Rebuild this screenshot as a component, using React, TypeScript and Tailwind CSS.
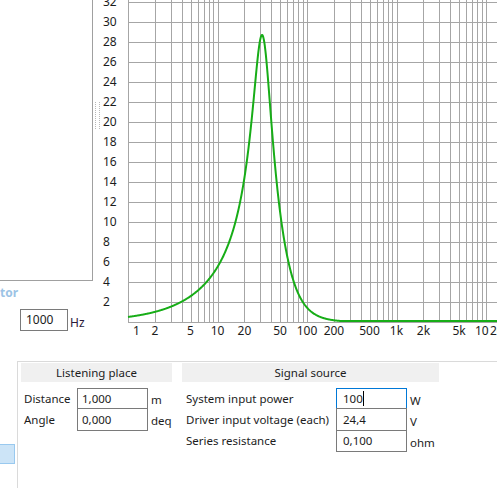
import React from "react";

const X = (f: number) => 128 + 89.5 * Math.log10(f);
const Y = (v: number) => 322 - 10 * v;

function curvePath() {
  const f0 = 32;
  const Q = 1.9;
  const raw = (f: number) => {
    const x = f / f0;
    const h = x / Math.sqrt((1 - x * x) ** 2 + (x / Q) ** 2);
    const l = 1 / Math.sqrt(1 + (x / 1.6) ** 4);
    return h * l;
  };
  let mx = 0;
  const pts: [number, number][] = [];
  for (let e = 0; e <= 4.35; e += 0.004) {
    const f = Math.pow(10, e);
    const r = raw(f);
    if (r > mx) mx = r;
    pts.push([f, r]);
  }
  const s = 28.7 / mx;
  return pts
    .map(([f, r], i) => {
      const v = Math.max(r * s, 0.1);
      return `${i === 0 ? "M" : "L"}${X(f).toFixed(2)},${Y(v).toFixed(2)}`;
    })
    .join(" ");
}

function Chart() {
  const vx: number[] = [];
  for (const d of [1, 10, 100, 1000, 10000]) {
    for (let m = 1; m <= 9; m++) {
      const x = X(d * m);
      if (x <= 498) vx.push(Math.round(x) + 0.5);
    }
  }
  const hy: number[] = [];
  for (let v = 0; v <= 32; v += 2) hy.push(Y(v) + 0.5);
  const ylabels: number[] = [];
  for (let v = 2; v <= 32; v += 2) ylabels.push(v);
  const xl: [string, number][] = [
    ["2", 2],
    ["5", 5],
    ["10", 10],
    ["20", 20],
    ["50", 50],
    ["100", 100],
    ["200", 200],
    ["500", 500],
    ["1k", 1000],
    ["2k", 2000],
    ["5k", 5000],
  ];
  return (
    <svg
      width={404}
      height={361}
      viewBox="93 0 404 361"
      className="shrink-0 block"
      style={{ fontFamily: "'Noto Sans', sans-serif" }}
    >
      <g stroke="#a6a6a6" strokeWidth={1} shapeRendering="crispEdges">
        {vx.map((x, i) => (
          <line key={"v" + i} x1={x} x2={x} y1={0} y2={322.5} />
        ))}
        {hy.map((y, i) => (
          <line key={"h" + i} x1={128} x2={497} y1={y} y2={y} />
        ))}
      </g>
      <g stroke="#b8b8b8" strokeWidth={1} strokeDasharray="1 1" shapeRendering="crispEdges">
        <line x1={95.5} x2={95.5} y1={102} y2={130} />
        <line x1={99.5} x2={99.5} y1={102} y2={130} />
      </g>
      <g fontSize={12} fill="#1c1c1c">
        {ylabels.map((v) => (
          <text key={v} x={103} y={Y(v) + 4.3}>
            {v}
          </text>
        ))}
        <text x={133} y={335}>
          1
        </text>
        {xl.map(([t, f]) => (
          <text key={t} x={X(f)} y={335} textAnchor="middle">
            {t}
          </text>
        ))}
        <text x={475} y={335}>
          10
        </text>
        <text x={490} y={335}>
          20k
        </text>
      </g>
      <path d={curvePath()} fill="none" stroke="#17ad17" strokeWidth={2} strokeLinejoin="round" />
    </svg>
  );
}

function Box({
  children,
  className,
}: {
  children: React.ReactNode;
  className: string;
}) {
  return <div className={className}>{children}</div>;
}

export default function App() {
  return (
    <div className="w-[497px] h-[488px] overflow-hidden bg-white font-['Noto_Sans',sans-serif] text-[#1c1c1c]">
      {/* top */}
      <div className="flex h-[361px]">
        <div className="w-[93px] shrink-0 flex flex-col">
          <div className="h-[281px] border-r border-b border-[#a0a0a0]" />
          <div className="mt-[4px] text-[12px] leading-[16px] font-bold text-[#9cc3e5]">tor</div>
          <div className="mt-[8px] ml-[20px] flex items-end">
            <div className="w-[48px] h-[22px] border border-[#7a7a7a] pl-[5px] text-[12px] leading-[20px]">
              1000
            </div>
            <div className="ml-[2px] text-[12px] leading-[16px] text-[#2a1a3a]">Hz</div>
          </div>
        </div>
        <Chart />
      </div>
      {/* bottom */}
      <div className="flex h-[127px]">
        <div className="w-[17px] shrink-0">
          <div className="mt-[83px] -ml-px w-[16px] h-[20px] bg-[#cce4f7] border border-[#99c9ef]" />
        </div>
        <div className="flex-1 border-l border-t border-[#dadada] pl-[3px] pt-[1px] text-[11.5px]">
          <div className="flex gap-[10px]">
            {/* Listening place */}
            <div className="w-[151px] shrink-0">
              <div className="h-[19px] bg-[#f0f0f0] flex items-center justify-center leading-none">
                Listening place
              </div>
              <div className="mt-[6px] flex flex-col">
                <div className="flex h-[21px]">
                  <div className="w-[56px] pl-[3px] flex items-center">Distance</div>
                  <Box className="w-[71px] border border-[#7a7a7a] pl-[4px] flex items-center">1,000</Box>
                  <div className="ml-[3px] flex items-center pt-[2px]">m</div>
                </div>
                <div className="flex h-[23px] -mt-px">
                  <div className="w-[56px] pl-[3px] flex items-center">Angle</div>
                  <Box className="w-[71px] border border-[#7a7a7a] pl-[4px] flex items-center">0,000</Box>
                  <div className="ml-[3px] flex items-center pt-[2px]">deq</div>
                </div>
              </div>
            </div>
            {/* Signal source */}
            <div className="w-[257px] shrink-0">
              <div className="h-[19px] bg-[#f0f0f0] flex items-center justify-center leading-none">
                Signal source
              </div>
              <div className="mt-[6px] flex flex-col">
                <div className="flex h-[21px]">
                  <div className="w-[154px] pl-[4px] flex items-center">System input power</div>
                  <Box className="w-[71px] border border-[#0078d7] pl-[6px] flex items-center">
                    100
                    <span className="inline-block w-px h-[15px] bg-black" />
                  </Box>
                  <div className="ml-[3px] flex items-center pt-[4px]">W</div>
                </div>
                <div className="flex h-[23px] -mt-px">
                  <div className="w-[154px] pl-[4px] flex items-center">Driver input voltage (each)</div>
                  <Box className="w-[71px] border border-[#7a7a7a] pl-[6px] flex items-center">24,4</Box>
                  <div className="ml-[3px] flex items-center pt-[4px]">V</div>
                </div>
                <div className="flex h-[22px] -mt-px">
                  <div className="w-[154px] pl-[4px] flex items-center">Series resistance</div>
                  <Box className="w-[71px] border border-[#7a7a7a] pl-[6px] flex items-center">0,100</Box>
                  <div className="ml-[3px] flex items-center pt-[4px]">ohm</div>
                </div>
              </div>
            </div>
          </div>
        </div>
      </div>
    </div>
  );
}
